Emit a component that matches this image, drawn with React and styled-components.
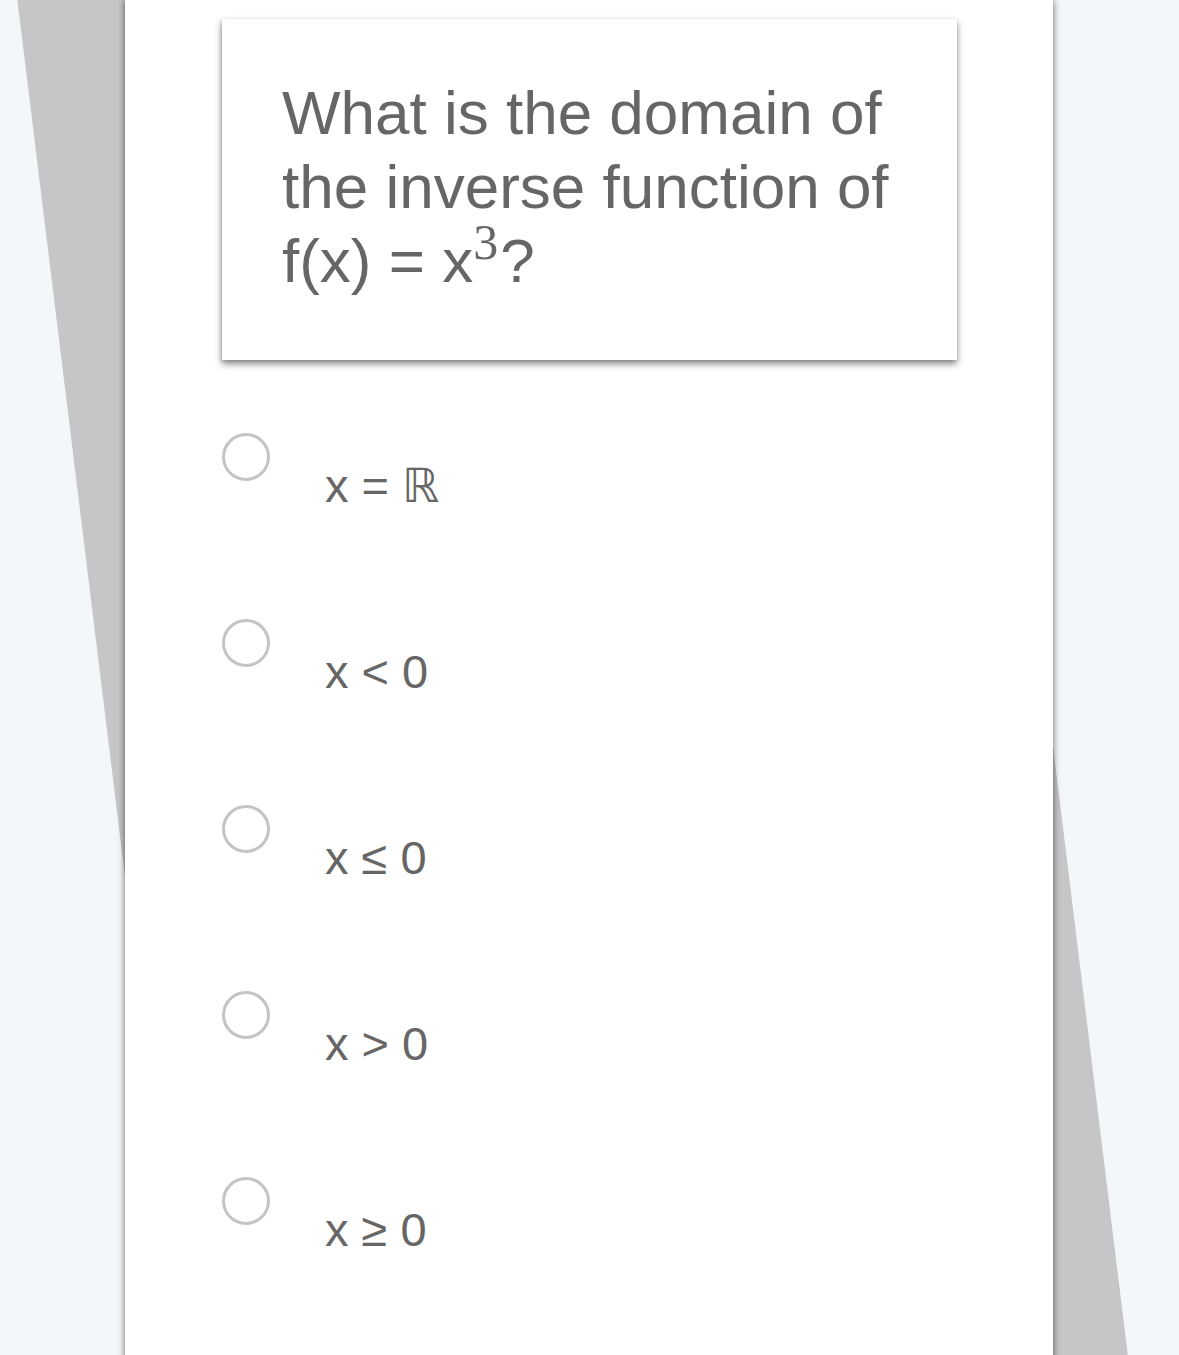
import React from "react";
import styled, { createGlobalStyle } from "styled-components";

const Global = createGlobalStyle`
  html, body { margin: 0; padding: 0; }
  body {
    background: #f4f7fa;
    font-family: "Liberation Sans", Arial, "DejaVu Sans", sans-serif;
  }
`;

const Page = styled.div`
  position: relative;
  height: 1355px;
  overflow: hidden;
  background: #f4f7fa;
`;

const BackSheet = styled.div`
  position: absolute;
  left: 104px;
  top: -823px;
  width: 937px;
  height: 3000px;
  background: #c6c5c7;
  transform: rotate(-7deg);
  z-index: 0;
`;

const Panel = styled.main`
  position: relative;
  z-index: 1;
  width: 928px;
  min-height: 1400px;
  margin: 0 0 0 125px;
  background: #ffffff;
  box-shadow: 0 0 7px rgba(0, 0, 0, 0.6);
  box-sizing: border-box;
  padding: 19px 0 0 97px;
  display: flex;
  flex-direction: column;
`;

const QuestionCard = styled.section`
  width: 735px;
  box-sizing: border-box;
  padding: 57px 40px 62px 60px;
  background: #fff;
  box-shadow: 0 4px 7px rgba(0, 0, 0, 0.45), -1px 1px 3px rgba(0, 0, 0, 0.15);
`;

const QuestionText = styled.p`
  margin: 0;
  font-size: 62px;
  line-height: 74px;
  color: #666666;
`;

const Sup = styled.span`
  font-family: "Liberation Serif", "Times New Roman", serif;
  font-size: 50px;
  line-height: 0;
  vertical-align: 23px;
  margin-right: 2px;
`;

const OptionList = styled.ul`
  list-style: none;
  margin: 73px 0 0 0;
  padding: 0;
  display: flex;
  flex-direction: column;
  gap: 106px;
`;

const Option = styled.li`
  display: flex;
  align-items: flex-start;
  height: 80px;
  cursor: pointer;
`;

const Radio = styled.span`
  flex: none;
  width: 48px;
  height: 48px;
  box-sizing: border-box;
  border: 3px solid #c4c4c4;
  border-radius: 50%;
  background: #fff;
`;

const Label = styled.span`
  margin: 26px 0 0 55px;
  font-size: 47px;
  line-height: 54px;
  color: #666666;
  white-space: pre;
`;

const options = ["x = ℝ", "x < 0", "x ≤ 0", "x > 0", "x ≥ 0"];

export default function App() {
  return (
    <>
      <Global />
      <Page>
        <BackSheet />
        <Panel>
          <QuestionCard>
            <QuestionText>
              What is the domain of the inverse function of f(x) = x<Sup>3</Sup>?
            </QuestionText>
          </QuestionCard>
          <OptionList>
            {options.map((o) => (
              <Option key={o}>
                <Radio />
                <Label>{o}</Label>
              </Option>
            ))}
          </OptionList>
        </Panel>
      </Page>
    </>
  );
}
